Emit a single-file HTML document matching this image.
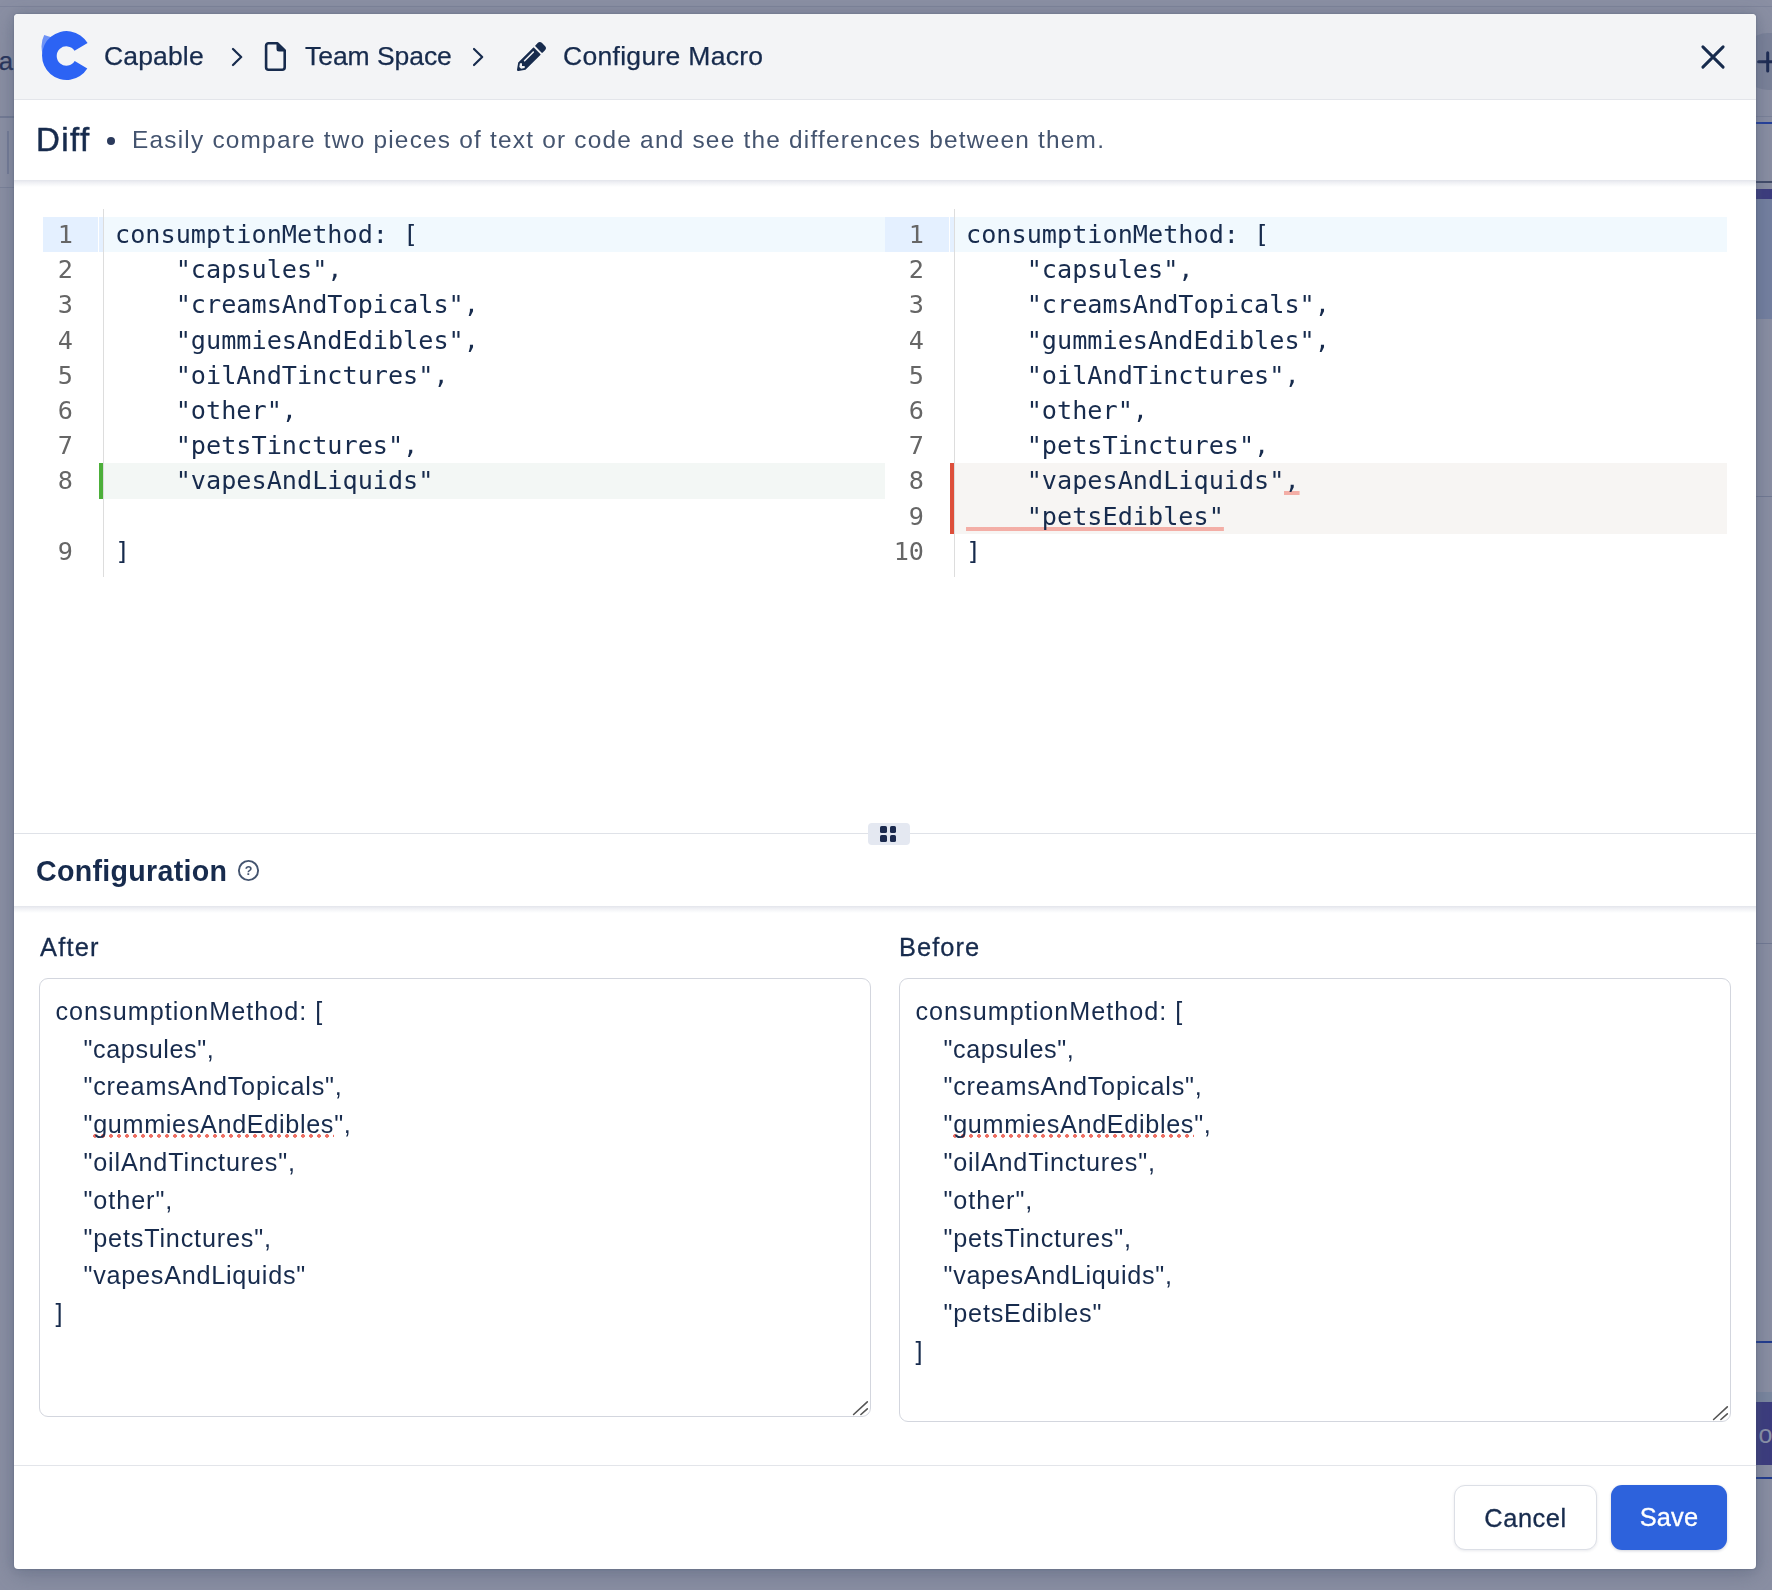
<!DOCTYPE html>
<html lang="en">
<head>
<meta charset="utf-8">
<title>Configure Macro</title>
<style>
*{box-sizing:border-box;margin:0;padding:0}
html,body{width:1772px;height:1590px;overflow:hidden}
body{background:#8a8fa3;font-family:"Liberation Sans",sans-serif;color:#172b4d;position:relative}
.abs{position:absolute}
/* backdrop remnants */
.bg-line{left:0;top:6px;width:1772px;height:1px;background:#7e849a}
/* modal */
.modal{will-change:transform;left:14px;top:14px;width:1742px;height:1555px;background:#fff;border-radius:4px;box-shadow:0 0 1.5px rgba(60,72,100,.6),0 6px 22px rgba(75,88,112,.4),0 0 12px rgba(75,88,112,.16);overflow:hidden}
.hdr{left:0;top:0;width:1742px;height:86px;background:#f3f4f6;border-bottom:1px solid #e3e5ea}
.crumb{top:-1px;height:86px;line-height:86px;font-size:26.5px;-webkit-text-stroke:0.25px #172b4d;color:#172b4d;white-space:nowrap}
.sub{left:0;top:86px;width:1742px;height:80px;background:#fff}
.shade{left:0;width:1742px;height:7px;background:linear-gradient(#e3e5eb,#f0f1f5 38%,rgba(255,255,255,0))}
.title{left:22px;top:0;height:80px;line-height:80px;font-size:33px;letter-spacing:1.4px;-webkit-text-stroke:0.5px #172b4d;color:#172b4d;white-space:nowrap}
.desc{left:118px;top:0;height:80px;line-height:80px;font-size:24.4px;letter-spacing:1.22px;color:#44546f;white-space:nowrap}
/* code editors */
.ed{top:195px;height:368px;font-family:"DejaVu Sans Mono","Liberation Mono",monospace;font-size:25.2px;color:#172b4d}
.ln{position:absolute;left:0;height:35.2px;line-height:35.2px;white-space:pre}
.num{position:absolute;text-align:right;color:#666;height:35.2px;line-height:35.2px}
.gborder{top:0;width:1px;height:368px;background:#ddd}
.del{background:linear-gradient(rgba(238,68,51,.4),rgba(238,68,51,.4)) bottom/100% 4px no-repeat}
.lbl{height:40px;line-height:40px;font-size:25.4px;color:#172b4d;white-space:nowrap;-webkit-text-stroke:0.3px #172b4d}
.ta{border:1.5px solid #d3d6de;border-radius:9px;background:#fff;padding:13.800px 0 0 15.500px;font-size:25.2px;color:#172b4d;overflow:hidden}
.tl{height:37.8px;line-height:37.8px;white-space:pre}
.in{letter-spacing:0}
.tx{letter-spacing:0}
.sp{background:radial-gradient(circle at 2px 2.200px,#ee6f63 1.7px,rgba(238,111,99,0) 2.300px) 0 23.700px/8px 4.500px repeat-x}
.grip{right:0.400px;bottom:-0.800px}
.btn{border-radius:11px;font-size:25.400px;line-height:64px;text-align:center;white-space:nowrap;-webkit-text-stroke:0.3px currentColor}
</style>
</head>
<body>
<div class="abs bg-line"></div>
<div class="abs" id="bgtool" style="left:0;top:116px;width:14px;height:71px;background:#8b90a4"></div>
<div class="abs" style="left:0;top:116px;width:14px;height:1.500px;background:#737b94"></div>
<div class="abs" style="left:0;top:187px;width:14px;height:1px;background:#7b8299"></div>
<div class="abs" style="left:7px;top:131px;width:2px;height:43px;background:#757d97"></div>
<div class="abs" id="bga" style="left:-1.200px;top:46px;font-size:25.800px;line-height:30px;color:#26335a;-webkit-text-stroke:0.250px #26335a">a</div>
<div class="abs" id="bgplusbg" style="left:1740px;top:33px;width:58px;height:57px;border-radius:28px;background:#7b8299"></div>
<svg class="abs" id="bgplus" style="left:1755px;top:49px" width="26" height="26" viewBox="0 0 26 26"><path d="M3.600 12.750 H23 M12.700 3.800 V21.900" stroke="#1c2a52" stroke-width="3" stroke-linecap="round" fill="none"/></svg>
<div class="abs" style="left:1756px;top:116px;width:16px;height:1px;background:#7b8299"></div>
<div class="abs" style="left:1756px;top:122px;width:16px;height:1.500px;background:#233f9c"></div>
<div class="abs" style="left:1756px;top:181px;width:16px;height:2px;background:#414b68"></div>
<div class="abs" style="left:1756px;top:189px;width:16px;height:10px;background:#3b3b7e"></div>
<div class="abs" style="left:1756px;top:199px;width:16px;height:119.500px;background:#7480a0"></div>
<div class="abs" style="left:1756px;top:496px;width:16px;height:1px;background:#727a93"></div>
<div class="abs" style="left:1756px;top:943px;width:16px;height:1px;background:#727a93"></div>
<div class="abs" style="left:1756px;top:1341px;width:16px;height:2px;background:#1f3a8e"></div>
<div class="abs" style="left:1756px;top:1392px;width:16px;height:10px;background:#7b879f"></div>
<div class="abs" style="left:1756px;top:1402px;width:16px;height:63px;background:#3b3b7e"></div>
<div class="abs" id="bgo" style="left:1758.500px;top:1419.300px;font-size:25px;line-height:30px;color:#8c94a9">o</div>
<div class="abs" style="left:1756px;top:1477px;width:16px;height:2px;background:#1f3a8e"></div>
<div class="abs modal">
  <div class="abs hdr">
    <svg class="abs" id="logo" style="left:26px;top:15.300px" width="52" height="54" viewBox="0 0 52 54">
      <path d="M4.2 6 L12 8.600 Q5 15 2.800 26 Q-0.400 15 4.200 6 Z" fill="#6d92f6"/>
      <path d="M47.6 14.100 A24.500 24.500 0 1 0 47.300 39.600 L34.700 32.100 A9.700 9.700 0 1 1 34.500 21.700 Z" fill="#2c63f4"/>
    </svg>
    <div class="abs crumb" id="c1" style="left:90px;letter-spacing:0.15px">Capable</div>
    <svg class="abs" id="ch1" style="left:214px;top:31px" width="18" height="24" viewBox="0 0 18 24"><path d="M5 4 L13.2 12 L5 20" fill="none" stroke="#172b4d" stroke-width="2.2" stroke-linecap="round" stroke-linejoin="round"/></svg>
    <svg class="abs" id="doc" style="left:250px;top:27px" width="23" height="31" viewBox="0 0 23 31"><path d="M4.6 2.3 H13.5 L20.7 9.5 V26.2 a2.5 2.5 0 0 1 -2.500 2.500 H4.600 a2.500 2.500 0 0 1 -2.500 -2.500 V4.800 a2.500 2.500 0 0 1 2.500 -2.500 Z" fill="none" stroke="#172b4d" stroke-width="2.600" stroke-linejoin="round"/><path d="M12.5 2 L21 10.500 H15 a2.500 2.500 0 0 1 -2.500 -2.500 Z" fill="#172b4d"/></svg>
    <div class="abs crumb" id="c2" style="left:291px;letter-spacing:-0.05px">Team Space</div>
    <svg class="abs" id="ch2" style="left:455.3px;top:31px" width="18" height="24" viewBox="0 0 18 24"><path d="M5 4 L13.2 12 L5 20" fill="none" stroke="#172b4d" stroke-width="2.2" stroke-linecap="round" stroke-linejoin="round"/></svg>
    <svg class="abs" id="pen" style="left:503px;top:28px" width="29" height="29" viewBox="0 0 512 512"><path fill="#172b4d" d="M497.9 142.1l-46.1 46.1c-4.700 4.700-12.300 4.700-17 0l-111-111c-4.700-4.700-4.700-12.300 0-17l46.100-46.100c18.700-18.700 49.100-18.700 67.900 0l60.100 60.100c18.800 18.700 18.800 49.100 0 67.900zM284.200 99.800L21.600 362.400.4 483.900c-2.900 16.400 11.400 30.600 27.800 27.800l121.500-21.300 262.600-262.600c4.700-4.700 4.700-12.300 0-17l-111-111c-4.800-4.700-12.400-4.700-17.100 0zM124.100 339.900c-5.500-5.500-5.500-14.300 0-19.800l154-154c5.500-5.500 14.300-5.500 19.800 0s5.500 14.300 0 19.800l-154 154c-5.500 5.500-14.300 5.500-19.800 0zM88 424h48v36.300l-64.500 11.300-31.100-31.100L51.700 376H88v48z"/></svg>
    <div class="abs crumb" id="c3" style="left:549px;letter-spacing:0.3px">Configure Macro</div>
    <svg class="abs" id="xic" style="left:1685px;top:29px" width="28" height="28" viewBox="0 0 28 28"><path d="M3.9 3.9 L24.100 24.100 M24.100 3.900 L3.900 24.100" fill="none" stroke="#172b4d" stroke-width="3" stroke-linecap="round"/></svg>
  </div>
  <div class="abs sub">
    <div class="abs title" id="ttl">Diff</div>
    <div class="abs" id="dot" style="left:92.6px;top:36.7px;width:8.600px;height:8.600px;border-radius:50%;background:#2b3a5c"></div>
    <div class="abs desc" id="dsc">Easily compare two pieces of text or code and see the differences between them.</div>
  </div>
  <div class="abs shade" style="top:166px"></div>
  <div class="abs shade" style="top:892px"></div>
  <div class="abs ed" id="edL" style="left:29px;width:842px">
    <div class="abs gborder" style="left:60px"></div>
    <div class="abs" style="left:0;top:8.0px;width:55px;height:35.2px;background:#e4f0ff"></div>
    <div class="abs" style="left:56px;top:8.0px;width:4px;height:35.2px;background:#e4f0ff"></div>
    <div class="abs" style="left:61px;top:8.0px;width:781px;height:35.2px;background:#f1f9fe"></div>
    <div class="abs" style="left:56px;top:254.4px;width:4px;height:35.2px;background:#4caf3a"></div>
    <div class="abs" style="left:61px;top:254.4px;width:781px;height:35.2px;background:#f3f7f5"></div>
    <div class="num" style="top:8.0px;left:0;width:30px">1</div><div class="ln" style="top:8.0px;left:72px">consumptionMethod: [</div>
    <div class="num" style="top:43.2px;left:0;width:30px">2</div><div class="ln" style="top:43.2px;left:72px">    &quot;capsules&quot;,</div>
    <div class="num" style="top:78.4px;left:0;width:30px">3</div><div class="ln" style="top:78.4px;left:72px">    &quot;creamsAndTopicals&quot;,</div>
    <div class="num" style="top:113.6px;left:0;width:30px">4</div><div class="ln" style="top:113.6px;left:72px">    &quot;gummiesAndEdibles&quot;,</div>
    <div class="num" style="top:148.8px;left:0;width:30px">5</div><div class="ln" style="top:148.8px;left:72px">    &quot;oilAndTinctures&quot;,</div>
    <div class="num" style="top:184.0px;left:0;width:30px">6</div><div class="ln" style="top:184.0px;left:72px">    &quot;other&quot;,</div>
    <div class="num" style="top:219.2px;left:0;width:30px">7</div><div class="ln" style="top:219.2px;left:72px">    &quot;petsTinctures&quot;,</div>
    <div class="num" style="top:254.4px;left:0;width:30px">8</div><div class="ln" style="top:254.4px;left:72px">    &quot;vapesAndLiquids&quot;</div>
    <div class="num" style="top:324.8px;left:0;width:30px">9</div><div class="ln" style="top:324.8px;left:72px">]</div>
  </div>
  <div class="abs ed" id="edR" style="left:871px;width:842px">
    <div class="abs gborder" style="left:69px"></div>
    <div class="abs" style="left:0;top:8.0px;width:64px;height:35.2px;background:#e4f0ff"></div>
    <div class="abs" style="left:65px;top:8.0px;width:4px;height:35.2px;background:#e4f0ff"></div>
    <div class="abs" style="left:70px;top:8.0px;width:772px;height:35.2px;background:#f1f9fe"></div>
    <div class="abs" style="left:65px;top:254.4px;width:4px;height:70.4px;background:#dd4f3b"></div>
    <div class="abs" style="left:70px;top:254.4px;width:772px;height:70.4px;background:#f7f5f3"></div>
    <div class="num" style="top:8.0px;left:0;width:39px">1</div><div class="ln" style="top:8.0px;left:81px">consumptionMethod: [</div>
    <div class="num" style="top:43.2px;left:0;width:39px">2</div><div class="ln" style="top:43.2px;left:81px">    &quot;capsules&quot;,</div>
    <div class="num" style="top:78.4px;left:0;width:39px">3</div><div class="ln" style="top:78.4px;left:81px">    &quot;creamsAndTopicals&quot;,</div>
    <div class="num" style="top:113.6px;left:0;width:39px">4</div><div class="ln" style="top:113.6px;left:81px">    &quot;gummiesAndEdibles&quot;,</div>
    <div class="num" style="top:148.8px;left:0;width:39px">5</div><div class="ln" style="top:148.8px;left:81px">    &quot;oilAndTinctures&quot;,</div>
    <div class="num" style="top:184.0px;left:0;width:39px">6</div><div class="ln" style="top:184.0px;left:81px">    &quot;other&quot;,</div>
    <div class="num" style="top:219.2px;left:0;width:39px">7</div><div class="ln" style="top:219.2px;left:81px">    &quot;petsTinctures&quot;,</div>
    <div class="num" style="top:254.4px;left:0;width:39px">8</div><div class="ln" style="top:254.4px;left:81px">    &quot;vapesAndLiquids&quot;<span class="del">,</span></div>
    <div class="num" style="top:289.6px;left:0;width:39px">9</div><div class="ln" style="top:289.6px;left:81px"><span class="del">    &quot;petsEdibles&quot;</span></div>
    <div class="num" style="top:324.8px;left:0;width:39px">10</div><div class="ln" style="top:324.8px;left:81px">]</div>
  </div>
  <div class="abs" id="divider" style="left:0;top:819px;width:1742px;height:1px;background:#dfe2e8"></div>
  <div class="abs" id="handle" style="left:854px;top:809px;width:42px;height:22px;border-radius:4px;background:#e4e8f1">
    <div class="abs" style="left:12.3px;top:3.1px;width:6.6px;height:6.6px;border-radius:1.6px;background:#1b2a4e"></div>
    <div class="abs" style="left:21.7px;top:3.1px;width:6.6px;height:6.6px;border-radius:1.6px;background:#1b2a4e"></div>
    <div class="abs" style="left:12.3px;top:12px;width:6.6px;height:6.6px;border-radius:1.6px;background:#1b2a4e"></div>
    <div class="abs" style="left:21.7px;top:12px;width:6.6px;height:6.6px;border-radius:1.6px;background:#1b2a4e"></div>
  </div>
  <div class="abs" id="cfgh" style="left:0;top:820px;width:1742px;height:72px">
    <div class="abs" id="cfgt" style="left:22px;top:0;height:72px;line-height:74px;font-size:28.6px;font-weight:bold;letter-spacing:0.3px;color:#172b4d;white-space:nowrap">Configuration</div>
    <svg class="abs" id="help" style="left:223.3px;top:25.300px" width="23" height="23" viewBox="0 0 23 23"><circle cx="11.5" cy="11.5" r="9.6" fill="none" stroke="#44546f" stroke-width="1.9"/><text x="11.5" y="16" text-anchor="middle" font-family="Liberation Sans, sans-serif" font-weight="bold" font-size="12.5" fill="#44546f">?</text></svg>
  </div>
  <div class="abs lbl" id="lblA" style="left:26px;top:913px;letter-spacing:1.2px">After</div>
  <div class="abs lbl" id="lblB" style="left:885px;top:913px;letter-spacing:1.05px">Before</div>
  <div class="abs ta" id="taL" style="left:25px;top:964px;width:832px;height:439px">
    <div class="tl"><span class="tx" style="letter-spacing:1.0px">consumptionMethod: [</span></div>
    <div class="tl"><span class="in">    </span><span class="tx" style="letter-spacing:0.6px">&quot;capsules&quot;,</span></div>
    <div class="tl"><span class="in">    </span><span class="tx" style="letter-spacing:0.79px">&quot;creamsAndTopicals&quot;,</span></div>
    <div class="tl"><span class="in">    </span><span class="tx" style="letter-spacing:0.67px">&quot;<span class="sp">gummiesAndEdibles</span>&quot;,</span></div>
    <div class="tl"><span class="in">    </span><span class="tx" style="letter-spacing:0.82px">&quot;oilAndTinctures&quot;,</span></div>
    <div class="tl"><span class="in">    </span><span class="tx" style="letter-spacing:0.93px">&quot;other&quot;,</span></div>
    <div class="tl"><span class="in">    </span><span class="tx" style="letter-spacing:0.82px">&quot;petsTinctures&quot;,</span></div>
    <div class="tl"><span class="in">    </span><span class="tx" style="letter-spacing:0.75px">&quot;vapesAndLiquids&quot;</span></div>
    <div class="tl"><span class="tx">]</span></div>
    <svg class="abs grip" width="18" height="18" viewBox="0 0 18 18"><path d="M1.600 15.500 L15.300 2.900 M8.900 15.500 L15.300 9.800" stroke="#555" stroke-width="1.600" stroke-linecap="round" fill="none"/></svg>
  </div>
  <div class="abs ta" id="taR" style="left:885px;top:964px;width:832px;height:444px">
    <div class="tl"><span class="tx" style="letter-spacing:1.0px">consumptionMethod: [</span></div>
    <div class="tl"><span class="in">    </span><span class="tx" style="letter-spacing:0.6px">&quot;capsules&quot;,</span></div>
    <div class="tl"><span class="in">    </span><span class="tx" style="letter-spacing:0.79px">&quot;creamsAndTopicals&quot;,</span></div>
    <div class="tl"><span class="in">    </span><span class="tx" style="letter-spacing:0.67px">&quot;<span class="sp">gummiesAndEdibles</span>&quot;,</span></div>
    <div class="tl"><span class="in">    </span><span class="tx" style="letter-spacing:0.82px">&quot;oilAndTinctures&quot;,</span></div>
    <div class="tl"><span class="in">    </span><span class="tx" style="letter-spacing:0.93px">&quot;other&quot;,</span></div>
    <div class="tl"><span class="in">    </span><span class="tx" style="letter-spacing:0.82px">&quot;petsTinctures&quot;,</span></div>
    <div class="tl"><span class="in">    </span><span class="tx" style="letter-spacing:0.69px">&quot;vapesAndLiquids&quot;,</span></div>
    <div class="tl"><span class="in">    </span><span class="tx" style="letter-spacing:0.81px">&quot;petsEdibles&quot;</span></div>
    <div class="tl"><span class="tx">]</span></div>
    <svg class="abs grip" width="18" height="18" viewBox="0 0 18 18"><path d="M1.600 15.500 L15.300 2.900 M8.900 15.500 L15.300 9.800" stroke="#555" stroke-width="1.600" stroke-linecap="round" fill="none"/></svg>
  </div>
  <div class="abs" id="fdiv" style="left:0;top:1451px;width:1742px;height:1px;background:#e3e5ea"></div>
  <div class="abs btn" id="bCancel" style="left:1440px;top:1471px;width:143px;height:65px;background:#fff;border:1px solid #dcdfe6;color:#172b4d;letter-spacing:0.55px;box-shadow:0 1px 3px rgba(30,40,80,.1)">Cancel</div>
  <div class="abs btn" id="bSave" style="left:1597px;top:1471px;width:116px;height:65px;background:#2d62dc;color:#fff;letter-spacing:0.2px;box-shadow:0 1px 3px rgba(30,40,80,.2)">Save</div>
</div>
</body>
</html>
